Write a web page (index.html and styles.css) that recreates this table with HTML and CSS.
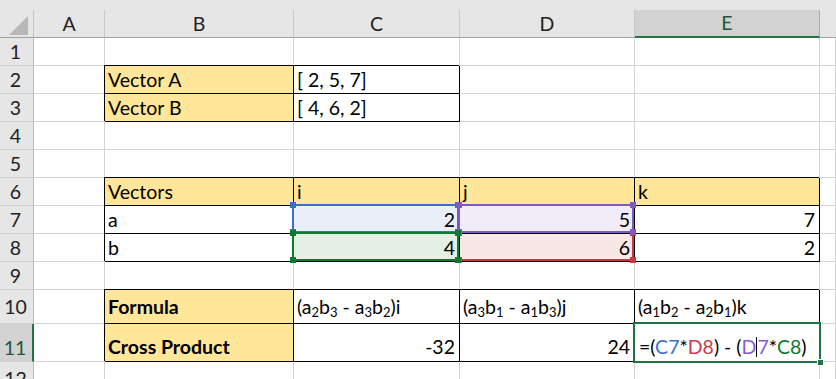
FILE: index.html
```html
<!DOCTYPE html>
<html>
<head>
<meta charset="utf-8">
<title>Cross Product</title>
<link rel="stylesheet" href="styles.css">
</head>
<body>
<div class="sheet">
  <div class="topband"></div>

  <div class="corner"><svg width="22" height="22" viewBox="0 0 22 22"><polygon points="20,2 20,21 1,21" fill="#b8b8b8"/></svg></div>
  <div class="ch">A</div><div class="ch">B</div><div class="ch">C</div><div class="ch">D</div><div class="ch sel">E</div><div class="ch end"></div>

  <div class="rh">1</div><div class="c"></div><div class="c"></div><div class="c"></div><div class="c"></div><div class="c"></div><div class="c"></div>

  <div class="rh">2</div><div class="c"></div><div class="c y bx"><span>Vector A</span></div><div class="c bx"><span>[ 2, 5, 7]</span></div><div class="c"></div><div class="c"></div><div class="c"></div>

  <div class="rh">3</div><div class="c"></div><div class="c y bx"><span>Vector B</span></div><div class="c bx"><span>[ 4, 6, 2]</span></div><div class="c"></div><div class="c"></div><div class="c"></div>

  <div class="rh">4</div><div class="c"></div><div class="c"></div><div class="c"></div><div class="c"></div><div class="c"></div><div class="c"></div>

  <div class="rh">5</div><div class="c"></div><div class="c"></div><div class="c"></div><div class="c"></div><div class="c"></div><div class="c"></div>

  <div class="rh">6</div><div class="c"></div><div class="c y bx">Vectors</div><div class="c y bx">i</div><div class="c y bx">j</div><div class="c y bx">k</div><div class="c"></div>

  <div class="rh">7</div><div class="c"></div><div class="c bx">a</div>
  <div class="c bx num ref r-blue">2<i class="hl"><b class="tl"></b><b class="tr"></b><b class="bl"></b><b class="br"></b></i></div>
  <div class="c bx num ref r-purple">5<i class="hl"><b class="tl"></b><b class="tr"></b><b class="bl"></b><b class="br"></b></i></div>
  <div class="c bx num">7</div><div class="c"></div>

  <div class="rh">8</div><div class="c"></div><div class="c bx">b</div>
  <div class="c bx num ref r-green">4<i class="hl"><b class="tl"></b><b class="tr"></b><b class="bl"></b><b class="br"></b></i></div>
  <div class="c bx num ref r-red">6<i class="hl"><b class="tl"></b><b class="tr"></b><b class="bl"></b><b class="br"></b></i></div>
  <div class="c bx num">2</div><div class="c"></div>

  <div class="rh">9</div><div class="c"></div><div class="c"></div><div class="c"></div><div class="c"></div><div class="c"></div><div class="c"></div>

  <div class="rh r10">10</div><div class="c r10"></div><div class="c y bx b r10">Formula</div>
  <div class="c bx r10"><span>(a<sub>2</sub>b<sub>3</sub> - a<sub>3</sub>b<sub>2</sub>)i</span></div>
  <div class="c bx r10"><span>(a<sub>3</sub>b<sub>1</sub> - a<sub>1</sub>b<sub>3</sub>)j</span></div>
  <div class="c bx r10"><span>(a<sub>1</sub>b<sub>2</sub> - a<sub>2</sub>b<sub>1</sub>)k</span></div>
  <div class="c r10"></div>

  <div class="rh r11 rsel">11</div><div class="c r11"></div><div class="c y bx b r11"><span>Cross Product</span></div>
  <div class="c bx num r11">-32</div>
  <div class="c bx num r11">24</div>
  <div class="c bx r11 active"><span class="formula">=(<span class="f-blue">C7</span>*<span class="f-red">D8</span>) - (<span class="f-purple">D</span><span class="caret"></span><span class="f-purple">7</span>*<span class="f-green">C8</span>)</span><i class="act"><b class="handle"></b></i></div>
  <div class="c r11"></div>

  <div class="rh r12">12</div><div class="c"></div><div class="c"></div><div class="c"></div><div class="c"></div><div class="c"></div><div class="c"></div>
</div>
</body>
</html>
```

FILE: styles.css
```css
* { box-sizing: border-box; }

html, body {
  margin: 0;
  padding: 0;
  background: #ffffff;
}

body {
  font-family: Lato, "Liberation Sans", sans-serif;
  font-size: 19.5px;
  color: #000;
}

.sheet {
  display: grid;
  width: 836px;
  height: 379px;
  overflow: hidden;
  grid-template-columns: 34px 71px 189px 166px 175px 185px 1fr;
  grid-template-rows: 10px 28px repeat(9, 28px) 34px 38px 1fr;
}

.topband {
  grid-column: 1 / -1;
  background: #e6e6e6;
}

.corner {
  background: #e6e6e6;
  border-right: 1px solid #c4c4c4;
  border-bottom: 1px solid #a0a0a0;
  display: flex;
  align-items: flex-end;
  justify-content: flex-end;
  padding: 0 3px 1px 0;
}
.corner svg { display: block; }

.ch {
  background: #e6e6e6;
  border-right: 1px solid #c8c8c8;
  border-bottom: 1px solid #a0a0a0;
  display: flex;
  align-items: center;
  justify-content: center;
  color: #222;
  line-height: 24px;
}
.ch.sel {
  background: #d2d2d2;
  color: #22553a;
  border-right-color: #ababab;
  border-bottom: 2px solid #217346;
}
.ch.end { border-right: none; }

.rh {
  background: #e6e6e6;
  border-right: 1px solid #b8b8b8;
  border-bottom: 1px solid #cfcfcf;
  display: flex;
  align-items: center;
  justify-content: center;
  padding-right: 2px;
  color: #222;
  line-height: 24px;
}
.rh.r11 { padding-top: 10px; }
.rh.r12 { align-items: flex-start; padding-top: 5px; }
.rh.rsel {
  background: #d2d2d2;
  color: #22553a;
  border-right: 2px solid #217346;
}

.c {
  border-right: 1px solid #d4d4d4;
  border-bottom: 1px solid #d4d4d4;
  display: flex;
  align-items: flex-end;
  padding: 0 3px 1px 3px;
  line-height: 24px;
  white-space: nowrap;
}
.c.r10 { padding-bottom: 4px; }
.c.r11 { padding-bottom: 2px; }

.y { background: #ffe699; }
.b { font-weight: 700; }
.num { justify-content: flex-end; padding-right: 4px; }

.bx {
  border-right-color: #000;
  border-bottom-color: #000;
  box-shadow: -1px -1px 0 0 #000;
}

sub {
  font-size: 13px;
  line-height: 0;
  vertical-align: -3px;
}

/* formula reference highlights */
.ref { position: relative; }
.r-blue   { background: #e9eef8; z-index: 1; --rc: #3b6fc6; }
.r-red    { background: #f9e7e7; z-index: 2; --rc: #c63a44; }
.r-purple { background: #f0ecf8; z-index: 3; --rc: #7f5bbd; }
.r-green  { background: #e4efe5; z-index: 4; --rc: #0d7a2f; }

.hl {
  position: absolute;
  top: -2px;
  left: -2px;
  right: 0;
  bottom: 0;
  border: 2px solid var(--rc);
}
.hl b {
  position: absolute;
  width: 6px;
  height: 6px;
  background: var(--rc);
}
.hl .tl { left: -4px; top: -4px; }
.hl .tr { right: -4px; top: -4px; }
.hl .bl { left: -4px; bottom: -4px; }
.hl .br { right: -4px; bottom: -4px; }

/* active cell in edit mode */
.active { position: relative; z-index: 5; background: #fff; }
.act {
  position: absolute;
  top: -2px;
  left: -2px;
  right: -2px;
  bottom: -2px;
  border: 2px solid #217346;
}
.handle {
  position: absolute;
  right: -5px;
  bottom: -5px;
  width: 7px;
  height: 7px;
  background: #217346;
  border: 1px solid #fff;
}
.formula { padding-left: 1px; }
.f-blue { color: #3b6fc6; }
.f-red { color: #d3394a; }
.f-purple { color: #8a5bd0; }
.f-green { color: #0d7a2f; }
.caret {
  display: inline-block;
  width: 0;
  height: 20px;
  border-left: 1px solid #000;
  vertical-align: -3px;
}
```
